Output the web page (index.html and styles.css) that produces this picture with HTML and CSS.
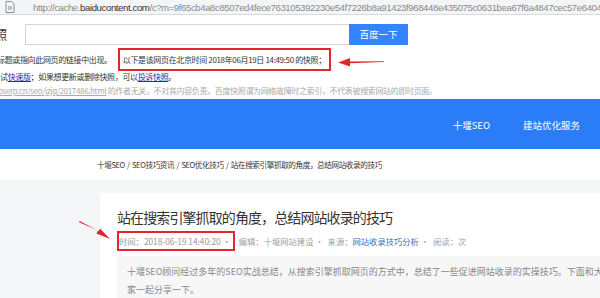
FILE: index.html
```html
<!DOCTYPE html>
<html lang="zh-CN">
<head>
    <meta charset="UTF-8">
    <title>百度快照</title>
    <link rel="stylesheet" href="styles.css">
</head>
<body>

<div class="urlbar">
    <svg class="page-icon" width="10" height="12" viewBox="0 0 10 12">
        <path d="M1 .5h5.5L9 3v8.5H1z" fill="none" stroke="#8a8f96"/>
        <path d="M3 6h4M3 8h4" stroke="#8a8f96"/>
    </svg>
    <span class="url">http://cache.<b>baiducontent.com</b>/c?m=9f65cb4a8c8507ed4fece763105392230e54f7226b8a91423f968448e435075c0631bea67f6a4847cec57e6404a</span>
</div>

<div class="snapshot">
    <div class="search-row">
        <span class="cut-label">照</span>
        <div class="search-input"></div>
        <div class="search-btn">百度一下</div>
    </div>
    <div class="note-row">
        <span class="cut-text">标题或指向此网页的链接中出现。</span>
        <span class="marked">以下是该网页在北京时间 2018年06月19日 14:49:50 的快照；</span>
    </div>
    <div class="note-line">试<a href="#">快速版</a>；如果想更新或删除快照，可以<a href="#">投诉快照</a>。</div>
    <div class="note-grey"><u>oserp.cn/seo/jzjq/2017486.html</u> 的作者无关，不对其内容负责。百度快照谓为网络故障时之索引，不代表被搜索网站的即时页面。</div>
</div>

<div class="header">
    <a href="#">十堰SEO</a>
    <a href="#">建站优化服务</a>
</div>

<div class="crumbs">十堰SEO / SEO技巧资讯 / SEO优化技巧 / 站在搜索引擎抓取的角度，总结网站收录的技巧</div>

<div class="main">
    <div class="article">
        <h1>站在搜索引擎抓取的角度，总结网站收录的技巧</h1>
        <div class="meta">
            <span class="marked">时间：2018-06-19 14:40:20 •</span>
            <span>编辑：十堰网站建设 •</span>
            <span>来源：<a href="#">网站收录技巧分析</a> •</span>
            <span>阅读：次</span>
        </div>
        <div class="summary">十堰SEO顾问经过多年的SEO实战总结，从搜索引擎抓取网页的方式中，总结了一些促进网站收录的实操技巧。下面和大家一起分享一下。</div>
    </div>
</div>

<svg class="arrow arrow-top" width="46" height="10" viewBox="0 0 46 10">
    <path d="M46 4.2L12 4.4 12 1 0 5.5 12 9.5 12 6.2 46 5z" fill="#e3262b"/>
</svg>
<svg class="arrow arrow-left" width="32" height="20" viewBox="0 0 32 20">
    <path d="M0 1.2L19 9.6 17.5 12.4 31 18 21 7.6 19.8 10 .6 0z" fill="#e3262b"/>
</svg>

</body>
</html>
```

FILE: styles.css
```css
body {
    margin: 0;
    width: 600px;
    height: 298px;
    overflow: hidden;
    position: relative;
    font-family: "Noto Sans CJK SC", "DejaVu Sans", sans-serif;
    background: #fff;
}
a {
    text-decoration: none;
}
.urlbar {
    height: 14px;
    background: #f3f5f7;
    border-bottom: 1px solid #d6dbe1;
    display: flex;
    align-items: center;
    white-space: nowrap;
    overflow: hidden;
}
.page-icon {
    margin: 0 0 0 5px;
    flex: none;
}
.url {
    margin-left: 18px;
    font-family: "Liberation Sans", Arial, sans-serif;
    font-size: 9.6px;
    letter-spacing: -0.4px;
    color: #8a8a8a;
}
.url b {
    font-weight: normal;
    color: #333;
}
.snapshot {
    font-size: 8px;
    letter-spacing: -0.35px;
    color: #333;
    white-space: nowrap;
    overflow: hidden;
}
.search-row {
    display: flex;
    align-items: center;
    margin-top: 9px;
    height: 21px;
    letter-spacing: 0;
}
.cut-label {
    font-size: 12px;
    margin-left: -5px;
    width: 30px;
}
.search-input {
    width: 323px;
    height: 19px;
    border: 1px solid #d4d4d4;
    border-right: none;
}
.search-btn {
    width: 59px;
    height: 21px;
    background: #3385ff;
    color: #fff;
    font-size: 9.5px;
    line-height: 21px;
    text-align: center;
}
.note-row {
    margin-top: 4px;
    height: 21px;
    display: flex;
    align-items: center;
}
.cut-text {
    margin-left: -3px;
    margin-right: 6px;
}
.marked {
    border: 2px solid #e3262b;
}
.note-row .marked {
    padding: 4px 3px;
}
.note-line {
    height: 13px;
    line-height: 13px;
}
.note-line a {
    color: #2a2ab0;
    text-decoration: underline;
}
.note-grey {
    margin-left: -2px;
    margin-top: 1px;
    height: 14px;
    line-height: 14px;
    color: #aaa;
}
.header {
    margin-top: 1px;
    height: 50px;
    background: #2a7df6;
    display: flex;
    align-items: center;
    justify-content: flex-end;
    gap: 33px;
    padding-right: 20px;
    padding-top: 2px;
    box-sizing: border-box;
}
.header a {
    color: #fff;
    font-size: 9.5px;
}
.crumbs {
    height: 31px;
    line-height: 31px;
    padding-left: 97px;
    font-size: 7.6px;
    letter-spacing: -0.4px;
    word-spacing: 1px;
    color: #333;
    white-space: nowrap;
}
.main {
    background: #f5f6f8;
    padding: 13px 0 0 100px;
    height: 107px;
}
.article {
    background: #fff;
    height: 100%;
    padding: 13px 0 0 17px;
    white-space: nowrap;
}
.article h1 {
    margin: 0;
    font-size: 14px;
    letter-spacing: -0.9px;
    font-weight: normal;
    color: #333;
    line-height: 22px;
}
.meta {
    margin-top: 4px;
    font-size: 8.3px;
    color: #a0a0a0;
    height: 18px;
    display: flex;
    align-items: center;
    gap: 4px;
}
.meta .marked {
    padding: 2px 2px 2px 0;
    color: #999;
}
.meta a {
    color: #3b6fb6;
}
.summary {
    margin-top: 6px;
    background: #f7f7f7;
    padding: 7px 0 0 10px;
    font-size: 9px;
    line-height: 18px;
    color: #888;
    white-space: normal;
    width: 478px;
    height: 40px;
}
.arrow {
    position: absolute;
}
.arrow-top {
    left: 338px;
    top: 57px;
}
.arrow-left {
    left: 79px;
    top: 221px;
}
```
